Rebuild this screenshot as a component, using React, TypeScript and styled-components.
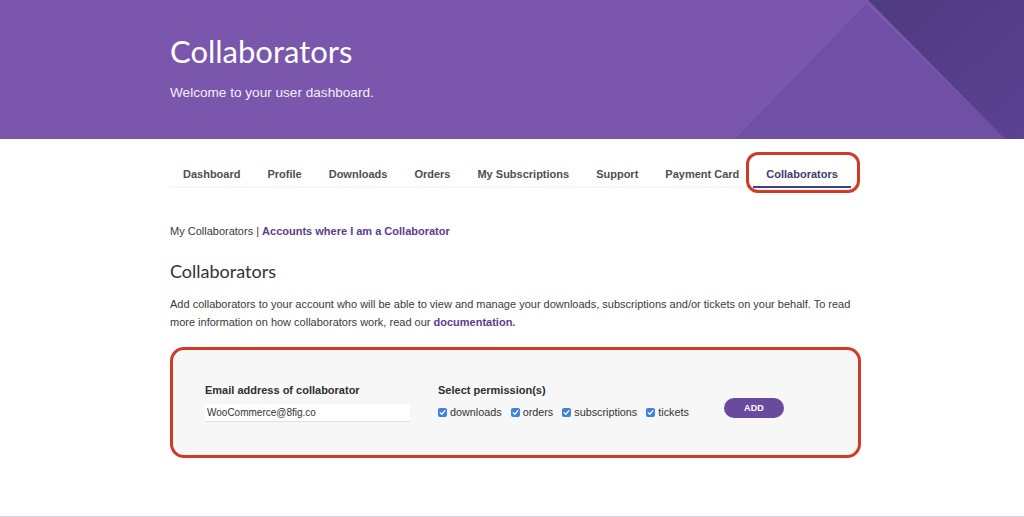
import React from "react";
import styled, { createGlobalStyle } from "styled-components";

// page reset and base font
const GlobalStyle = createGlobalStyle`
  html, body {
    margin: 0;
    padding: 0;
    background: #ffffff;
  }
  body {
    font-family: "Liberation Sans", Arial, sans-serif;
    color: #333333;
  }
`;

const Page = styled.div`
  height: 517px;
  box-sizing: border-box;
  border-bottom: 1px solid #d2cfd6;
  overflow: hidden;
`;

// purple banner on top
const Hero = styled.header`
  position: relative;
  height: 139px;
  background: #7a56ad;
  overflow: hidden;
`;

const HeroArt = styled.svg`
  position: absolute;
  top: 0;
  right: 0;
  width: 290px;
  height: 139px;
`;

const Container = styled.div`
  position: relative;
  width: 691px;
  margin-left: 170px;
`;

const HeroInner = styled(Container)`
  padding-top: 32px;
`;

const HeroTitle = styled.h1`
  margin: 0;
  font-family: Lato, "Open Sans", sans-serif;
  font-weight: 400;
  font-size: 31px;
  line-height: 38px;
  color: #ffffff;
`;

const HeroText = styled.p`
  margin: 15px 0 0;
  font-size: 13.6px;
  line-height: 16px;
  color: #f3eefa;
`;

// tab navigation
const Tabs = styled.nav`
  display: flex;
  margin-top: 21px;
  margin-left: -0.5px;
`;

const Tab = styled.a<{ $active?: boolean }>`
  position: relative;
  display: block;
  padding: 7px 13.5px 5px;
  font-size: 11px;
  font-weight: 700;
  line-height: 14px;
  color: ${(p) => (p.$active ? "#3f3b6d" : "#4f4f4f")};
  border-bottom: 2px solid ${(p) => (p.$active ? "#4a3a8c" : "#f6f6f6")};
  text-decoration: none;
  white-space: nowrap;
`;

// red annotation ring drawn over the active tab
const Ring = styled.span`
  position: absolute;
  top: -8px;
  bottom: -7px;
  left: -7px;
  right: -9px;
  border: 3px solid #cf3b26;
  border-radius: 12px;
  pointer-events: none;
`;

const Crumbs = styled.div`
  margin-top: 36px;
  font-size: 11px;
  line-height: 14px;
  color: #3a3a3a;
`;

const CrumbLink = styled.a`
  color: #5b3d8e;
  font-weight: 700;
  text-decoration: none;
`;

const SectionTitle = styled.h2`
  margin: 21px 0 0;
  font-family: Lato, "Open Sans", sans-serif;
  font-weight: 400;
  font-size: 18px;
  line-height: 24px;
  color: #333333;
`;

const Intro = styled.p`
  margin: 12px 0 0;
  width: 685px;
  font-size: 11px;
  line-height: 18px;
  color: #3a3a3a;
`;

const DocLink = styled.a`
  color: #5b3d8e;
  font-weight: 700;
  text-decoration: none;
`;

// form panel with red annotation border
const Panel = styled.form`
  margin-top: 16px;
  box-sizing: border-box;
  height: 111px;
  padding: 33px 0 0 32px;
  background: #f7f7f7;
  border: 3px solid #cf3b26;
  border-radius: 14px;
  display: flex;
  align-items: flex-start;
`;

const Field = styled.div<{ $width: number }>`
  display: flex;
  flex-direction: column;
  width: ${(p) => p.$width}px;
`;

const Label = styled.div`
  font-size: 11px;
  font-weight: 700;
  line-height: 14px;
  color: #2f2f2f;
`;

const EmailInput = styled.input`
  margin-top: 7px;
  box-sizing: border-box;
  width: 205px;
  height: 18px;
  padding: 0 0 0 2px;
  border: none;
  border-bottom: 1px solid #e2e2e2;
  background: #ffffff;
  font-family: "Liberation Sans", Arial, sans-serif;
  font-size: 10px;
  color: #333333;
  outline: none;
`;

const Checks = styled.div`
  display: flex;
  gap: 9px;
  margin-top: 8px;
`;

const CheckLabel = styled.label`
  display: flex;
  align-items: center;
  gap: 3px;
  font-size: 10.8px;
  line-height: 14px;
  color: #333333;
`;

const Box = styled.span`
  display: inline-flex;
  align-items: center;
  justify-content: center;
  width: 9px;
  height: 9px;
  border-radius: 2px;
  background: #3f82d9;
`;

const AddButton = styled.button`
  margin: 15px 0 0 33px;
  width: 60px;
  height: 20px;
  border: none;
  border-radius: 10px;
  background: #6a4a9d;
  color: #ffffff;
  font-family: "Liberation Sans", Arial, sans-serif;
  font-size: 9px;
  font-weight: 700;
  letter-spacing: 0.2px;
  cursor: pointer;
`;

const tabs = [
  "Dashboard",
  "Profile",
  "Downloads",
  "Orders",
  "My Subscriptions",
  "Support",
  "Payment Card",
];

const permissions = ["downloads", "orders", "subscriptions", "tickets"];

function Check({ label }: { label: string }) {
  return (
    <CheckLabel>
      <Box>
        <svg width="7" height="7" viewBox="0 0 8 8">
          <path
            d="M1.3 4.2 L3.2 6 L6.8 1.9"
            fill="none"
            stroke="#fff"
            strokeWidth="1.4"
            strokeLinecap="round"
            strokeLinejoin="round"
          />
        </svg>
      </Box>
      {label}
    </CheckLabel>
  );
}

export default function App() {
  return (
    <Page>
      <GlobalStyle />
      <Hero>
        <HeroArt viewBox="0 0 290 139" preserveAspectRatio="none">
          <defs>
            <linearGradient id="dark" x1="0" y1="0" x2="1" y2="1">
              <stop offset="0" stopColor="#4e3a80" />
              <stop offset="1" stopColor="#5c4292" />
            </linearGradient>
          </defs>
          <polygon points="132,4 272,139 1,139" fill="#6f50a4" />
          <polygon points="134,0 290,0 290,139 271,139" fill="url(#dark)" />
        </HeroArt>
        <HeroInner>
          <HeroTitle>Collaborators</HeroTitle>
          <HeroText>Welcome to your user dashboard.</HeroText>
        </HeroInner>
      </Hero>

      <Container>
        <Tabs>
          {tabs.map((t) => (
            <Tab key={t}>{t}</Tab>
          ))}
          <Tab $active>
            Collaborators
            <Ring />
          </Tab>
        </Tabs>

        <Crumbs>
          My Collaborators | <CrumbLink>Accounts where I am a Collaborator</CrumbLink>
        </Crumbs>

        <SectionTitle>Collaborators</SectionTitle>
        <Intro>
          Add collaborators to your account who will be able to view and manage
          your downloads, subscriptions and/or tickets on your behalf. To read
          more information on how collaborators work, read our{" "}
          <DocLink>documentation.</DocLink>
        </Intro>

        <Panel onSubmit={(e) => e.preventDefault()}>
          <Field $width={233}>
            <Label>Email address of collaborator</Label>
            <EmailInput defaultValue="WooCommerce@8fig.co" />
          </Field>
          <Field $width={253}>
            <Label>Select permission(s)</Label>
            <Checks>
              {permissions.map((p) => (
                <Check key={p} label={p} />
              ))}
            </Checks>
          </Field>
          <AddButton type="submit">ADD</AddButton>
        </Panel>
      </Container>
    </Page>
  );
}
